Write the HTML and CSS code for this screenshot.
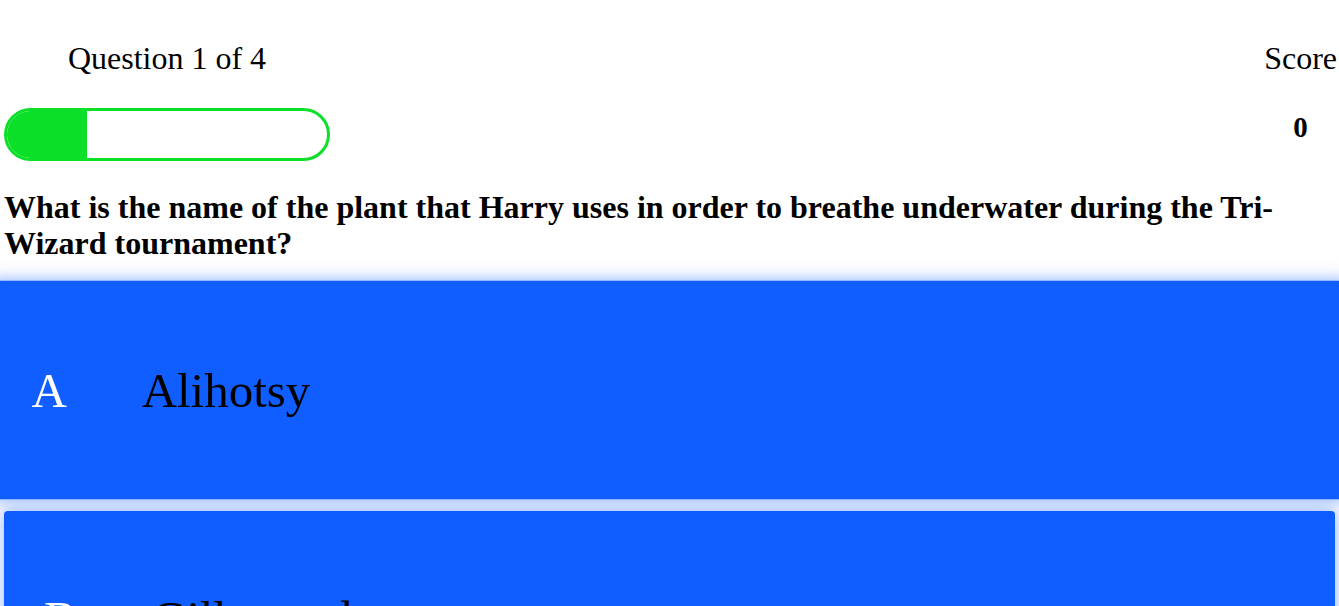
FILE: index.html
```html
<!DOCTYPE html>
<html>
<head>
<meta charset="utf-8">
<title>Quiz</title>
<link rel="stylesheet" href="styles.css">
</head>
<body>
<div class="page">
  <div class="header">
    <div class="progress-col">
      <div class="label">Question 1 of 4</div>
      <div class="bar"><div class="fill" style="width:25%"></div></div>
    </div>
    <div class="score-col">
      <div class="label">Score</div>
      <div class="score">0</div>
    </div>
  </div>
  <div class="question">What is the name of the plant that Harry uses in order to breathe underwater during the Tri-Wizard tournament?</div>
  <div class="answers">
    <div class="answer active"><span class="letter">A</span><span class="text">Alihotsy</span></div>
    <div class="answer"><span class="letter">B</span><span class="text">Gillyweed</span></div>
    <div class="answer"><span class="letter">C</span><span class="text">Mandrake</span></div>
    <div class="answer"><span class="letter">D</span><span class="text">Devil's Snare</span></div>
  </div>
</div>
</body>
</html>
```
FILE: styles.css
```css
html, body {
  margin: 0;
  padding: 0;
  background: #fff;
}
body {
  font-family: "Liberation Serif", "Times New Roman", serif;
  color: #000;
  overflow: hidden;
}
.page {
  padding: 0 4px;
}
.header {
  display: flex;
  justify-content: space-between;
  padding-top: 41px;
}
.progress-col {
  width: 326px;
  text-align: center;
}
.label {
  font-size: 32px;
  line-height: 35px;
}
.bar {
  margin-top: 32px;
  height: 53px;
  box-sizing: border-box;
  border: 3px solid #0bdf28;
  border-radius: 27px;
  overflow: hidden;
  display: flex;
}
.fill {
  height: 100%;
  background: #0bdf28;
}
.score-col {
  text-align: center;
  margin-right: -2px;
}
.score {
  margin-top: 34px;
  font-size: 29px;
  font-weight: bold;
  line-height: 35px;
}
.question {
  margin-top: 28px;
  font-size: 32px;
  font-weight: bold;
  line-height: 36px;
}
.answers {
  margin-top: 22px;
  display: flex;
  flex-direction: column;
  gap: 14px;
}
.answer {
  height: 214px;
  flex-shrink: 0;
  display: flex;
  align-items: center;
  padding-left: 40px;
  background: #105eff;
  border-radius: 4px;
  box-shadow: 0 0 16px rgba(16, 94, 255, 0.5);
  font-size: 48px;
}
.answer.active {
  transform: scale(1.02);
}
.letter {
  width: 108px;
  flex-shrink: 0;
  color: #fff;
}
.text {
  color: #000;
}
```
